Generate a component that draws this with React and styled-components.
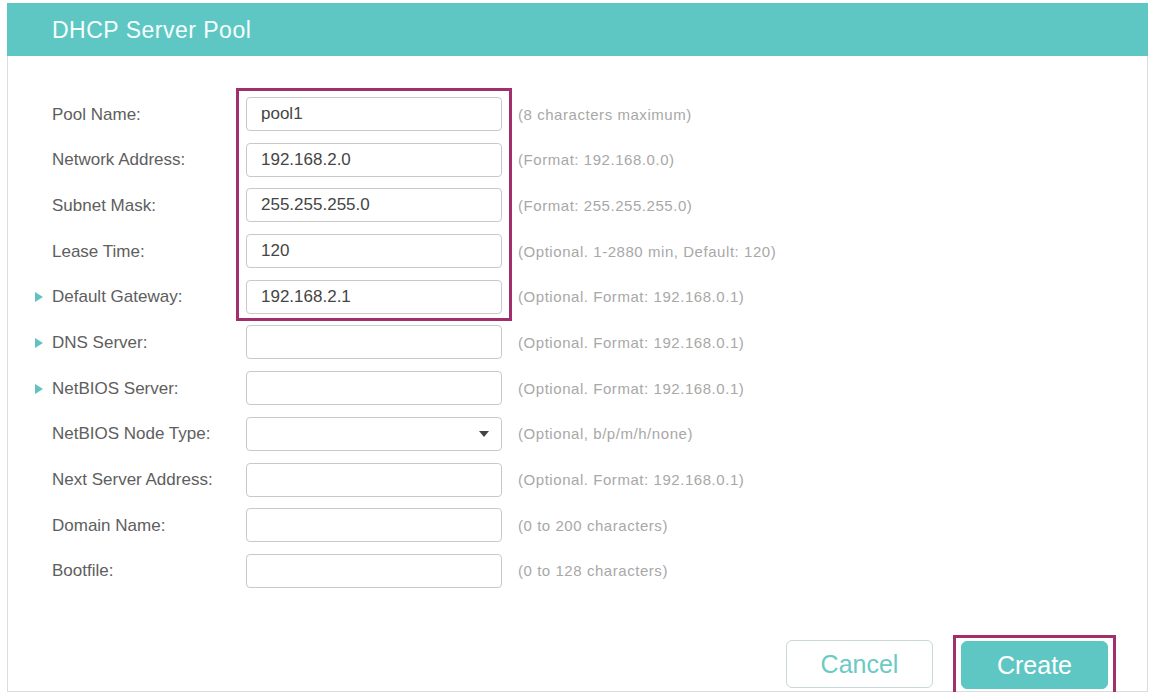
import styled, { createGlobalStyle } from "styled-components";

const GlobalStyle = createGlobalStyle`
  html, body {
    margin: 0;
    padding: 0;
    background: #ffffff;
    font-family: "Liberation Sans", Arial, sans-serif;
  }
`;

const Page = styled.div`
  padding: 3px 2px 0 7px;
  height: 698px;
  box-sizing: border-box;
`;

const Panel = styled.div`
  height: 689px;
  box-sizing: border-box;
  border: 1px solid #dcdcdc;
  border-top: none;
  display: flex;
  flex-direction: column;
`;

const Header = styled.div`
  height: 53px;
  background: #5fc7c3;
  display: flex;
  align-items: center;
  padding-left: 45px;
  padding-top: 1px;
  box-sizing: border-box;
  margin: 0 -1px;
  font-size: 23px;
  color: #f4fffe;
  letter-spacing: 0.5px;
`;

const Form = styled.div`
  display: grid;
  grid-template-columns: 195px 256px auto;
  grid-auto-rows: 34px;
  column-gap: 16px;
  row-gap: 11.7px;
  padding: 41px 0 0 27px;
`;

const Label = styled.div`
  grid-column: 1;
  display: flex;
  align-items: center;
  padding-top: 1px;
  font-size: 17px;
  color: #5e5e5e;
`;

const Marker = styled.span`
  width: 17px;
  flex: none;
  display: flex;
  align-items: center;

  &::before {
    content: "";
    display: ${(p) => (p.$show ? "block" : "none")};
    border-left: 8px solid #5fc4bf;
    border-top: 5px solid transparent;
    border-bottom: 5px solid transparent;
  }
`;

const Field = styled.div`
  grid-column: 2;
  box-sizing: border-box;
  border: 1px solid #c9c9c9;
  border-radius: 4px;
  background: #fff;
  display: flex;
  align-items: center;
  justify-content: space-between;
  padding: 0 13px 0 14px;
  font-size: 17px;
  color: #454545;
`;

const Caret = styled.span`
  width: 0;
  height: 0;
  margin-right: -1px;
  border-top: 6px solid #444;
  border-left: 5px solid transparent;
  border-right: 5px solid transparent;
`;

const Hint = styled.div`
  grid-column: 3;
  display: flex;
  align-items: center;
  font-size: 15px;
  color: #a8a8a8;
  letter-spacing: 0.55px;
  white-space: nowrap;
`;

const Highlight = styled.div`
  grid-column: 2;
  grid-row: 1 / 6;
  margin: -9px -10px -7px;
  border: 3px solid #a02f6c;
  pointer-events: none;
`;

const Footer = styled.div`
  margin-top: auto;
  display: flex;
  justify-content: flex-end;
  align-items: flex-end;
  gap: 20px;
  padding-right: 31px;
`;

const Button = styled.button`
  width: 147px;
  height: 48px;
  box-sizing: border-box;
  border-radius: 6px;
  font-family: "Liberation Sans", Arial, sans-serif;
  font-size: 25px;
  cursor: pointer;
  border: 1px solid ${(p) => (p.$primary ? "#5fc7c3" : "#c8d8d6")};
  background: ${(p) => (p.$primary ? "#5fc7c3" : "#ffffff")};
  color: ${(p) => (p.$primary ? "#ffffff" : "#6ccac5")};
  margin-bottom: 3px;
`;

const ButtonMark = styled.div`
  border: 3px solid #a02f6c;
  border-bottom: none;
  padding: 3px 5px 0;
  display: flex;
  margin-bottom: -1px;

  & > button {
    margin-bottom: 3px;
  }
`;

const rows = [
  { label: "Pool Name:", value: "pool1", hint: "(8 characters maximum)" },
  { label: "Network Address:", value: "192.168.2.0", hint: "(Format: 192.168.0.0)" },
  { label: "Subnet Mask:", value: "255.255.255.0", hint: "(Format: 255.255.255.0)" },
  { label: "Lease Time:", value: "120", hint: "(Optional. 1-2880 min, Default: 120)" },
  { label: "Default Gateway:", value: "192.168.2.1", hint: "(Optional. Format: 192.168.0.1)", more: true },
  { label: "DNS Server:", value: "", hint: "(Optional. Format: 192.168.0.1)", more: true },
  { label: "NetBIOS Server:", value: "", hint: "(Optional. Format: 192.168.0.1)", more: true },
  { label: "NetBIOS Node Type:", value: "", hint: "(Optional, b/p/m/h/none)", select: true },
  { label: "Next Server Address:", value: "", hint: "(Optional. Format: 192.168.0.1)" },
  { label: "Domain Name:", value: "", hint: "(0 to 200 characters)" },
  { label: "Bootfile:", value: "", hint: "(0 to 128 characters)" },
];

export default function App() {
  return (
    <>
      <GlobalStyle />
      <Page>
        <Panel>
          <Header>DHCP Server Pool</Header>
          <Form>
            {rows.map((r, i) => (
              <Row key={r.label} row={r} index={i + 1} />
            ))}
            <Highlight />
          </Form>
          <Footer>
            <Button>Cancel</Button>
            <ButtonMark>
              <Button $primary>Create</Button>
            </ButtonMark>
          </Footer>
        </Panel>
      </Page>
    </>
  );
}

function Row({ row, index }) {
  return (
    <>
      <Label style={{ gridRow: index }}>
        <Marker $show={row.more} />
        {row.label}
      </Label>
      <Field style={{ gridRow: index }}>
        <span>{row.value}</span>
        {row.select && <Caret />}
      </Field>
      <Hint style={{ gridRow: index }}>{row.hint}</Hint>
    </>
  );
}
